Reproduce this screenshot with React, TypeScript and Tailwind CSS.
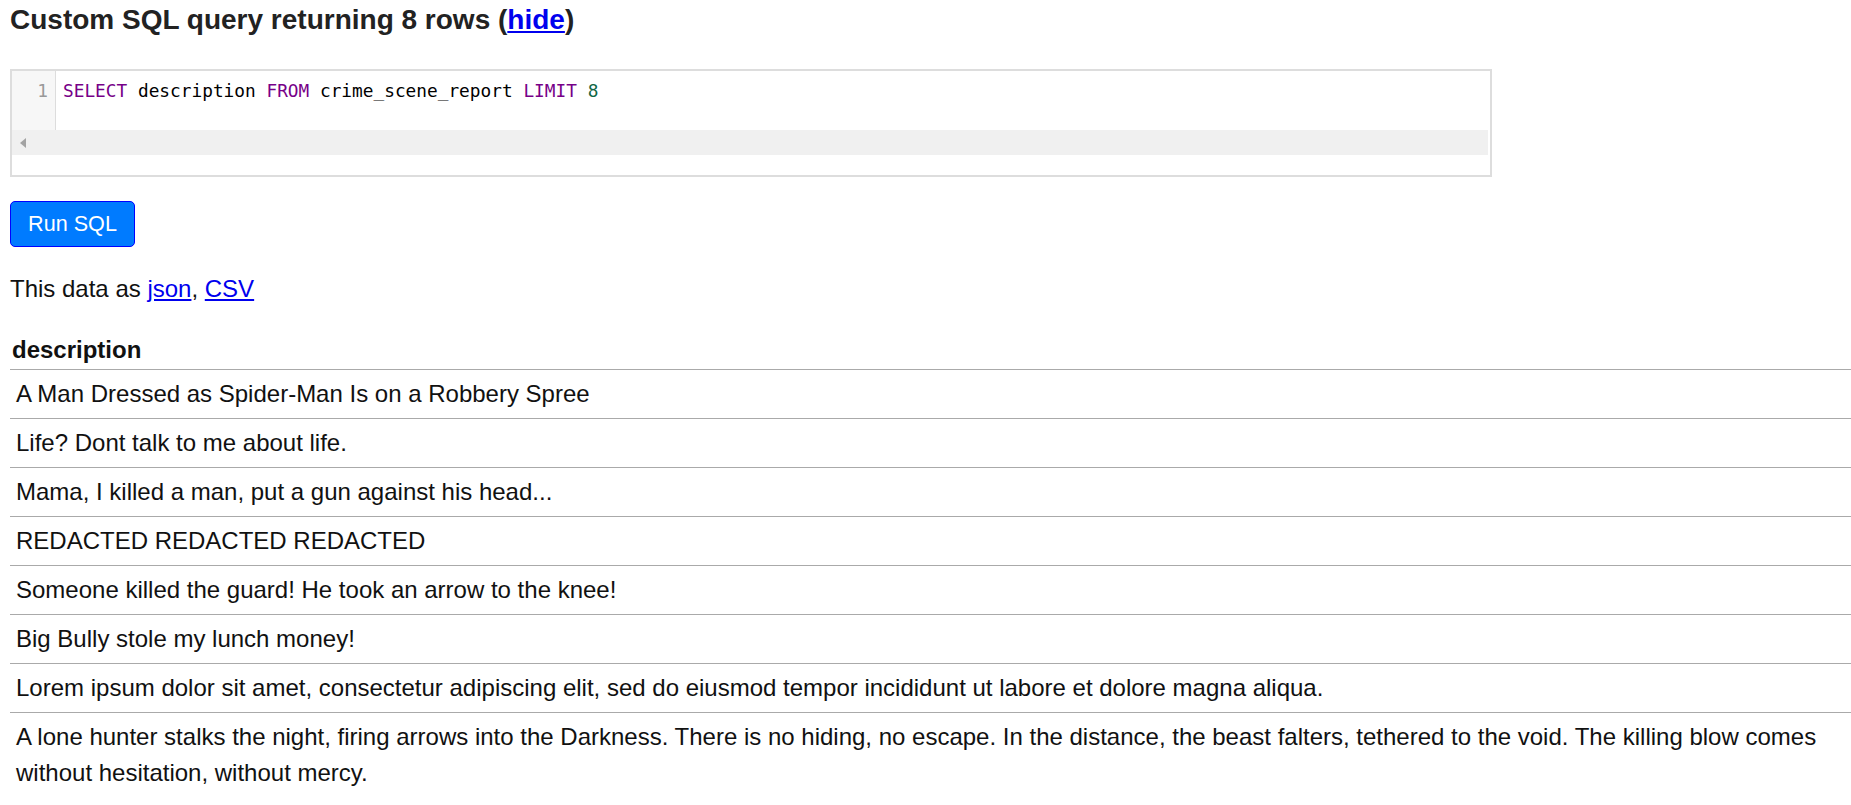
const rows = [
  "A Man Dressed as Spider-Man Is on a Robbery Spree",
  "Life? Dont talk to me about life.",
  "Mama, I killed a man, put a gun against his head...",
  "REDACTED REDACTED REDACTED",
  "Someone killed the guard! He took an arrow to the knee!",
  "Big Bully stole my lunch money!",
  "Lorem ipsum dolor sit amet, consectetur adipiscing elit, sed do eiusmod tempor incididunt ut labore et dolore magna aliqua.",
  "A lone hunter stalks the night, firing arrows into the Darkness. There is no hiding, no escape. In the distance, the beast falters, tethered to the void. The killing blow comes without hesitation, without mercy.",
];

const SqlEditor = () => {
  return (
    <div className="mt-[33px] w-[1482px] h-[108px] border-2 border-[#dddddd] bg-white flex flex-col">
      <div className="flex h-[59px]">
        <div className="w-[44px] bg-[#f7f7f7] border-r border-[#dddddd] pt-[8px] pr-[7px] text-right text-[#999999] leading-[24px] text-[17.8px] font-['DejaVu_Sans_Mono',monospace]">
          1
        </div>
        <div className="pl-[7px] pt-[8px] leading-[24px] text-[17.8px] text-black font-['DejaVu_Sans_Mono',monospace] whitespace-pre">
          <span className="text-[#770088]">SELECT</span> description{" "}
          <span className="text-[#770088]">FROM</span> crime_scene_report{" "}
          <span className="text-[#770088]">LIMIT</span>{" "}
          <span className="text-[#116644]">8</span>
        </div>
      </div>
      <div className="h-[25px] bg-[#f0f0f0] flex items-center pl-[8px] mr-[2px]">
        <svg width="6" height="10" viewBox="0 0 6 10">
          <polygon points="6,0 0,5 6,10" fill="#a3a3a3" />
        </svg>
      </div>
    </div>
  );
};

const App = () => {
  return (
    <div className="min-h-screen bg-white pl-[10px] text-[#111111] text-[24px] font-['Liberation_Sans',Arial,sans-serif]">
      <h3 className="pt-[4px] text-[28px] leading-[32px] font-bold text-[#222222]">
        Custom SQL query returning 8 rows (
        <a href="#" className="text-[#0000ee] underline">
          hide
        </a>
        )
      </h3>

      <SqlEditor />

      <button className="mt-[24px] w-[125px] h-[46px] rounded-[5px] border border-[#0000ff] bg-[#007bff] text-white text-[21.6px]">
        Run SQL
      </button>

      <p className="mt-[24px] leading-[36px]">
        This data as{" "}
        <a href="#" className="text-[#0000ee] underline">
          json
        </a>
        ,{" "}
        <a href="#" className="text-[#0000ee] underline">
          CSV
        </a>
      </p>

      <table className="mt-[24px] w-full border-collapse">
        <thead>
          <tr>
            <th className="text-left font-bold px-[2px] py-px leading-[36px]">description</th>
          </tr>
        </thead>
        <tbody>
          {rows.map((r) => (
            <tr key={r} className="border-t border-[#aaaaaa]">
              <td className="px-[6px] py-[6px] leading-[36px]">{r}</td>
            </tr>
          ))}
        </tbody>
      </table>
    </div>
  );
};

export default App;
